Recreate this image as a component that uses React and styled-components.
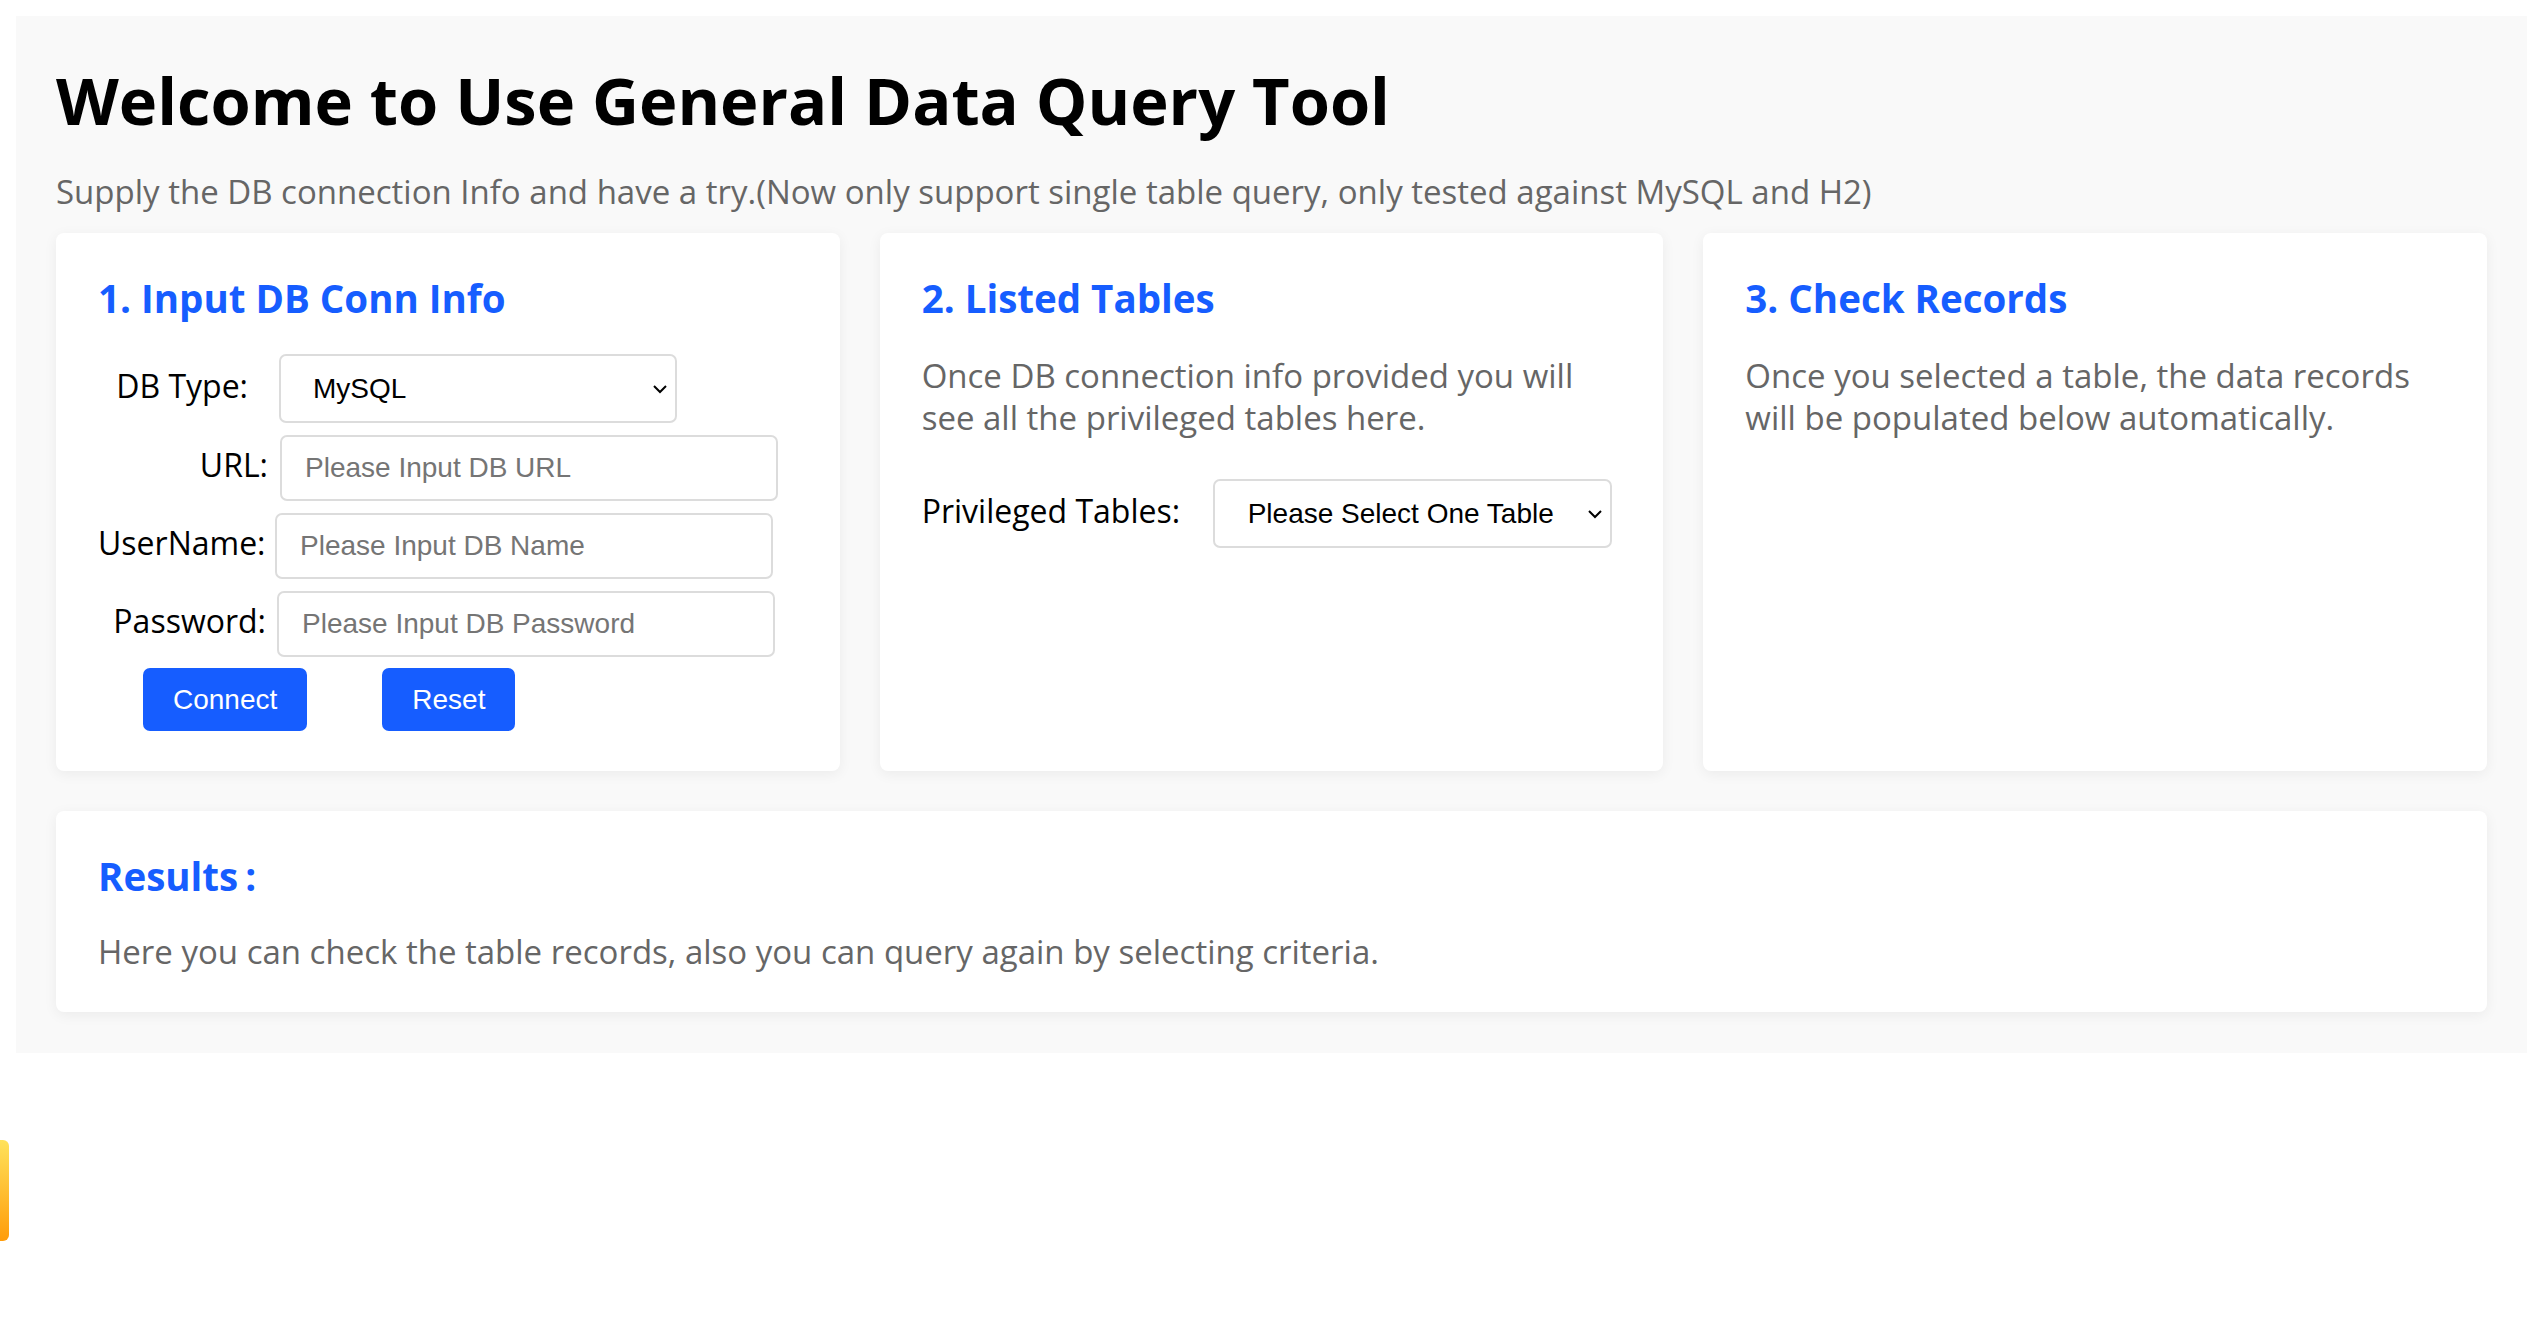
import React from 'react'
import styled, { createGlobalStyle } from 'styled-components'

const GlobalStyle = createGlobalStyle`
  html, body {
    margin: 0;
    padding: 0;
    background: #fff;
  }

  body {
    font-family: 'Open Sans', 'Noto Sans', sans-serif;
  }

  * {
    box-sizing: border-box;
  }
`

const Page = styled.div`
  margin: 16px;
  padding: 44px 40px 41px;
  background: #f9f9f9;
`

const Title = styled.h1`
  margin: 0;
  font-size: 65px;
  line-height: 80px;
  font-weight: 700;
  color: #000;
`

const Subtitle = styled.p`
  margin: 31px 0 20px;
  font-size: 33px;
  line-height: 42px;
  color: #666;
`

const CardRow = styled.div`
  display: grid;
  grid-template-columns: repeat(3, 1fr);
  gap: 40px;
`

const Card = styled.div`
  background: #fff;
  border-radius: 8px;
  box-shadow: 0 3px 14px rgba(0, 0, 0, 0.06);
  padding: 41px 42px ${p => p.$bottom || 40}px;
  margin-top: ${p => p.$top || 0}px;
`

const CardTitle = styled.h3`
  margin: 0;
  font-size: 38.5px;
  line-height: 48px;
  font-weight: 700;
  color: #165dff;
`

const Colon = styled.span`
  margin-left: 7px;
`

const Text = styled.p`
  margin: ${p => p.$top || 33}px 0 0;
  font-size: 33px;
  line-height: 42px;
  color: #666;
`

const Form = styled.div`
  display: flex;
  flex-direction: column;
  gap: 12px;
  margin-top: 32px;
`

const Row = styled.div`
  display: flex;
  align-items: center;
  margin-top: ${p => p.$top || 0}px;
`

const Label = styled.label`
  flex: none;
  width: ${p => p.$width}px;
  padding-right: ${p => p.$gap || 0}px;
  padding-bottom: 6px;
  text-align: ${p => (p.$left ? 'left' : 'right')};
  font-size: 32px;
  line-height: 32px;
  color: #000;
  white-space: nowrap;
`

const SelectWrap = styled.div`
  position: relative;
  width: ${p => p.$width}px;
  height: 69px;
`

const Select = styled.select`
  appearance: none;
  width: 100%;
  height: 100%;
  padding: 0 40px 0 ${p => p.$pad || 32}px;
  border: 2px solid #dcdcdc;
  border-radius: 7px;
  background: #fff;
  font-family: 'Liberation Sans', Arial, sans-serif;
  font-size: 28px;
  color: #000;
  outline: none;
`

const Chevron = styled.svg`
  position: absolute;
  right: 9px;
  top: 30px;
  pointer-events: none;
`

const Input = styled.input`
  width: 498px;
  height: 66px;
  padding: 0 23px;
  border: 2px solid #dcdcdc;
  border-radius: 7px;
  background: #fff;
  font-family: 'Liberation Sans', Arial, sans-serif;
  font-size: 28px;
  color: #000;
  outline: none;

  &::placeholder {
    color: #757575;
  }
`

const Buttons = styled.div`
  display: flex;
  gap: 75px;
  padding-left: 45px;
  margin-top: -1px;
`

const Button = styled.button`
  height: 63px;
  padding: 0 30px;
  border: none;
  border-radius: 7px;
  background: #165dff;
  color: #fff;
  font-family: 'Liberation Sans', Arial, sans-serif;
  font-size: 28px;
  cursor: pointer;
`

const SideTab = styled.div`
  position: fixed;
  left: 0;
  top: 1140px;
  width: 9px;
  height: 101px;
  border-radius: 0 6px 6px 0;
  background: linear-gradient(#ffe25a, #ff9c0a);
`

const Arrow = () => (
  <Chevron width="16" height="10" viewBox="0 0 16 10">
    <polyline points="2,2 8,8 14,2" fill="none" stroke="#000" strokeWidth="2" />
  </Chevron>
)

const Dropdown = ({ width, pad, children }) => (
  <SelectWrap $width={width}>
    <Select $pad={pad}>{children}</Select>
    <Arrow />
  </SelectWrap>
)

export default function App() {
  return (
    <>
      <GlobalStyle />
      <Page>
        <Title>Welcome to Use General Data Query Tool</Title>
        <Subtitle>
          Supply the DB connection Info and have a try.(Now only support single table query, only tested against MySQL and H2)
        </Subtitle>
        <CardRow>
          <Card>
            <CardTitle>1. Input DB Conn Info</CardTitle>
            <Form>
              <Row>
                <Label $width={181} $gap={31}>DB Type:</Label>
                <Dropdown width={398}>
                  <option>MySQL</option>
                  <option>H2</option>
                </Dropdown>
              </Row>
              <Row>
                <Label $width={182} $gap={12}>URL:</Label>
                <Input placeholder="Please Input DB URL" />
              </Row>
              <Row>
                <Label $width={177} $gap={11}>UserName:</Label>
                <Input placeholder="Please Input DB Name" />
              </Row>
              <Row>
                <Label $width={179} $gap={11}>Password:</Label>
                <Input type="password" placeholder="Please Input DB Password" />
              </Row>
              <Buttons>
                <Button>Connect</Button>
                <Button>Reset</Button>
              </Buttons>
            </Form>
          </Card>
          <Card>
            <CardTitle>2. Listed Tables</CardTitle>
            <Text>Once DB connection info provided you will see all the privileged tables here.</Text>
            <Row $top={40}>
              <Label $width={291} $left>Privileged Tables:</Label>
              <Dropdown width={399} pad={33}>
                <option>Please Select One Table</option>
              </Dropdown>
            </Row>
          </Card>
          <Card>
            <CardTitle>3. Check Records</CardTitle>
            <Text>Once you selected a table, the data records will be populated below automatically.</Text>
          </Card>
        </CardRow>
        <Card $top={40} $bottom={39}>
          <CardTitle>Results<Colon>:</Colon></CardTitle>
          <Text $top={31}>Here you can check the table records, also you can query again by selecting criteria.</Text>
        </Card>
      </Page>
      <SideTab />
    </>
  )
}
